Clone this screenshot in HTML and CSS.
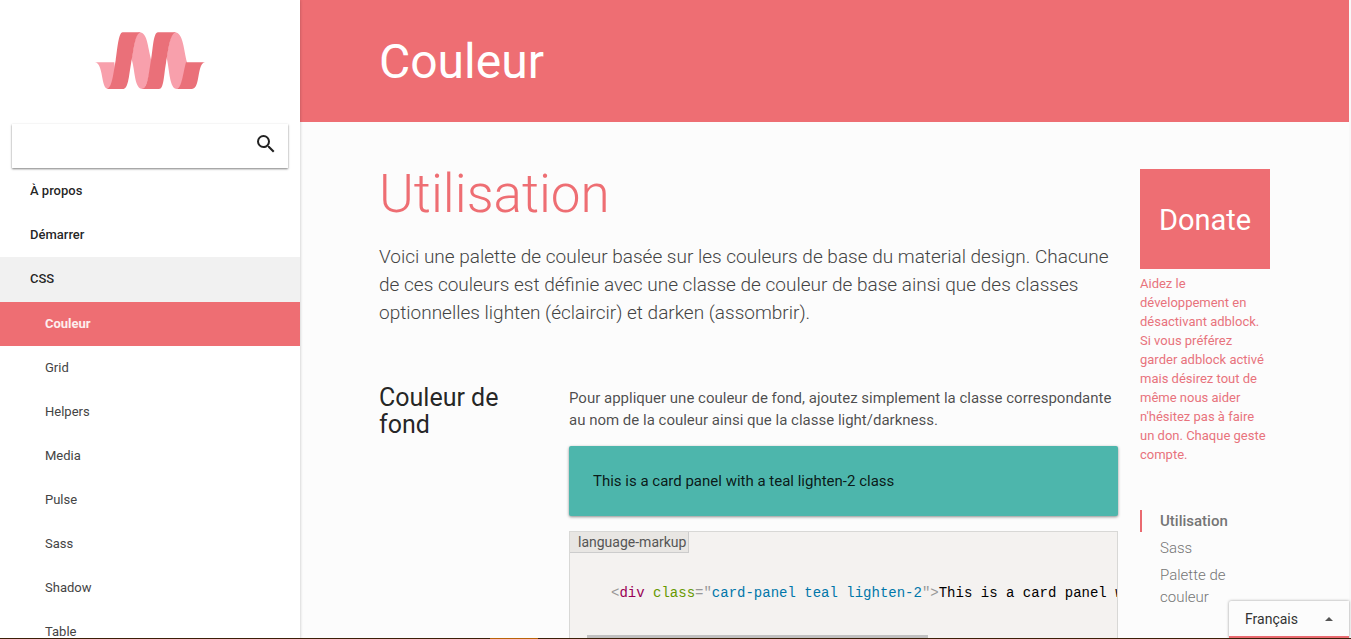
FILE: index.html
```html
<!DOCTYPE html>
<html lang="fr">
<head>
<meta charset="utf-8">
<title>Couleur</title>
<link rel="stylesheet" href="styles.css">
</head>
<body>
<div class="page">
  <aside class="sidebar">
    <a class="logo" href="#" aria-label="Accueil">
      <svg width="112" height="60" viewBox="40 32 336 180" aria-hidden="true">
        <path fill="#f8a0ac" d="M42 126H101L103 150C98 185 91 204 82 206C60 206 69 126 42 126ZM176 36C203 36 201 90 214 125C205 165 198 204 186 206C160 205 164 150 153 118C160 75 166 36 176 36ZM282 36C308 36 309 90 319 126C309 168 304 202 289 206C266 205 267 150 258 112C265 70 271 36 282 36Z"/>
        <path fill="#ea7079" d="M126 36H180C162 39 159 95 151 130C144 170 143 206 126 206H79C95 202 98 158 105 120C110 90 113 36 126 36ZM232 36H286C267 39 263 92 256 128C249 166 250 206 235 206H184C202 203 204 157 211 120C217 85 218 36 232 36ZM316 126H374C348 126 360 206 334 206H288C304 203 307 158 316 126Z"/>
      </svg>
    </a>
    <form class="search">
      <input class="search-input" type="search" aria-label="Rechercher">
      <button class="search-button" type="button" aria-label="Lancer la recherche">
        <svg width="24" height="24" viewBox="0 0 24 24" aria-hidden="true"><path fill="#222" d="M15.5 14h-.79l-.28-.27A6.47 6.47 0 0 0 16 9.5 6.5 6.5 0 1 0 9.5 16c1.61 0 3.09-.59 4.23-1.57l.27.28v.79l5 4.99L20.49 19l-4.99-5zm-6 0C7.01 14 5 11.99 5 9.5S7.01 5 9.5 5 14 7.01 14 9.5 11.99 14 9.5 14z"/></svg>
      </button>
    </form>
    <nav class="menu">
      <a class="menu-item" href="#">À propos</a>
      <a class="menu-item" href="#">Démarrer</a>
      <a class="menu-item open" href="#">CSS</a>
      <a class="menu-item sub active" href="#">Couleur</a>
      <a class="menu-item sub" href="#">Grid</a>
      <a class="menu-item sub" href="#">Helpers</a>
      <a class="menu-item sub" href="#">Media</a>
      <a class="menu-item sub" href="#">Pulse</a>
      <a class="menu-item sub" href="#">Sass</a>
      <a class="menu-item sub" href="#">Shadow</a>
      <a class="menu-item sub" href="#">Table</a>
    </nav>
  </aside>
  <div class="body">
    <header class="banner"><h1 class="title">Couleur</h1></header>
    <div class="columns">
      <main class="content">
        <h2 class="heading">Utilisation</h2>
        <p class="caption">Voici une palette de couleur basée sur les couleurs de base du material design. Chacune de ces couleurs est définie avec une classe de couleur de base ainsi que des classes optionnelles lighten (éclaircir) et darken (assombrir).</p>
        <section class="example">
          <h3 class="subheading">Couleur de fond</h3>
          <div class="detail">
            <p class="text">Pour appliquer une couleur de fond, ajoutez simplement la classe correspondante au nom de la couleur ainsi que la classe light/darkness.</p>
            <div class="card">This is a card panel with a teal lighten-2 class</div>
            <div class="code">
              <span class="code-label">language-markup</span>
              <pre class="code-text"><span class="punct">&lt;</span><span class="tag">div</span> <span class="attr">class</span><span class="punct">="</span><span class="value">card-panel teal lighten-2</span><span class="punct">"&gt;</span>This is a card panel w</pre>
              <div class="scroll"></div>
            </div>
          </div>
        </section>
      </main>
      <aside class="side">
        <a class="donate" href="#">Donate</a>
        <a class="plea" href="#">Aidez le développement en désactivant adblock. Si vous préférez garder adblock activé mais désirez tout de même nous aider n'hésitez pas à faire un don. Chaque geste compte.</a>
        <nav class="toc">
          <a class="toc-item current" href="#">Utilisation</a>
          <a class="toc-item" href="#">Sass</a>
          <a class="toc-item" href="#">Palette de couleur</a>
        </nav>
      </aside>
    </div>
  </div>
  <button class="language" type="button">Français
    <svg width="8" height="4" viewBox="0 0 8 4" aria-hidden="true"><path fill="#555" d="M0 4L4 0L8 4Z"/></svg>
  </button>
  <div class="taskbar"><span class="taskbar-mark"></span></div>
</div>
</body>
</html>
```
FILE: styles.css
```css
* { box-sizing: border-box; }
body { margin: 0; font-family: Roboto, "Liberation Sans", sans-serif; color: rgba(0,0,0,.87); background: #f8f8f8; }
a { text-decoration: none; color: inherit; }
h1, h2, h3, p, pre { margin: 0; }
.page { position: relative; display: flex; height: 100vh; overflow: hidden; padding-right: 2px; }

.sidebar { flex: 0 0 300px; background: #fff; box-shadow: 0 0 3px rgba(0,0,0,.25); z-index: 1; }
.logo { display: flex; justify-content: center; height: 124px; padding-top: 31px; }
.search { display: flex; align-items: center; height: 44px; margin: 0 12px 1px; padding-right: 10px; background: #fff; box-shadow: 0 1px 2px rgba(0,0,0,.5); }
.search-input { flex: 1; min-width: 0; height: 40px; padding: 0 16px; border: 0; outline: 0; background: none; font: 16px Roboto, sans-serif; }
.search-button { display: flex; padding: 0; border: 0; background: none; margin-bottom: 4px; }
.menu { display: flex; flex-direction: column; }
.menu-item { height: 44px; padding: 0 30px; font-size: 13px; line-height: 43px; font-weight: 500; }
.menu-item.open { height: 45px; background: #f1f1f1; }
.menu-item.sub { padding-left: 45px; font-weight: 400; color: #444; }
.menu-item.sub.active { background: #ee6e73; color: #fdeeee; font-weight: 700; }

.body { flex: 1; min-width: 0; background: #fcfcfc; }
.banner { height: 122px; padding: 0 79px; background: #ee6e73; }
.title { font-size: 48px; line-height: 124px; font-weight: 400; color: #fff; }
.columns { display: grid; grid-template-columns: minmax(0, 1fr) 130px; column-gap: 22px; padding: 0 79px; }
.heading { padding-top: 41px; font-size: 53px; line-height: 62px; font-weight: 300; color: #ee6e73; }
.caption { margin-top: 18px; font-size: 19px; line-height: 28px; font-weight: 300; color: #444; }
.example { display: grid; grid-template-columns: 1fr 549px; margin-top: 57px; }
.subheading { font-size: 25px; line-height: 27px; font-weight: 400; padding: 0 40px 0 0; }
.text { padding-top: 3px; font-size: 15px; line-height: 22px; color: rgba(0,0,0,.71); }
.card { margin-top: 15px; height: 70px; padding: 0 24px; border-radius: 2px; background: #4db6ac; font-size: 15px; line-height: 70px; box-shadow: 0 1px 3px rgba(0,0,0,.45); }
.code { margin-top: 15px; height: 140px; border: 1px solid #d8d8d6; background: #f4f2f0; overflow: hidden; }
.code-label { display: block; width: 119px; height: 21px; padding-left: 8px; border-right: 1px solid #ccc; border-bottom: 1px solid #ccc; background: #e8e6e3; font-size: 14px; line-height: 21px; color: #555; }
.code-text { padding: 29px 0 0 41px; font: 14px/22px "Liberation Mono", monospace; color: #000; }
.punct { color: #999; }
.tag { color: #905; }
.attr { color: #690; }
.value { color: #07a; }
.scroll { width: 341px; height: 12px; margin: 31px 0 0 17px; background: #c1c1c1; }

.side { padding-top: 47px; }
.donate { display: block; height: 100px; background: #ee6e73; color: #fff; font-size: 29px; line-height: 102px; text-align: center; }
.plea { display: block; margin-top: 5px; font-size: 13px; line-height: 19px; color: #e8737c; }
.toc { display: flex; flex-direction: column; gap: 5px; margin-top: 46px; }
.toc-item { padding-left: 20px; font-size: 15px; line-height: 22px; font-weight: 300; color: #757575; }
.toc-item.current { padding-left: 18px; border-left: 2px solid #ea6a70; font-weight: 500; }

.language { position: absolute; right: 2px; bottom: 1px; z-index: 2; display: flex; align-items: center; justify-content: space-between; width: 120px; height: 37px; padding: 0 16px; border: 0; border-bottom: 2px solid #ea6a70; border-radius: 2px 0 0 0; background: #fcfcfc; box-shadow: 0 0 3px rgba(0,0,0,.4); font: 14px Roboto, sans-serif; color: #333; }
.taskbar { position: absolute; left: 0; right: 0; bottom: 0; z-index: 3; height: 1px; padding-left: 490px; background: #3b1f08; }
.taskbar-mark { display: block; width: 48px; height: 1px; background: #b86408; }
```
